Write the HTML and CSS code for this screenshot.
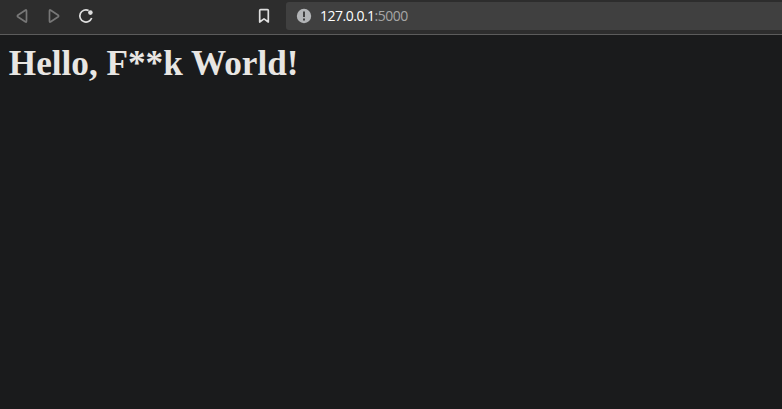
FILE: index.html
```
<!DOCTYPE html>
<html lang="en">
<head>
<meta charset="utf-8">
<title>Hello</title>
<link rel="stylesheet" href="styles.css">
</head>
<body>
<header class="toolbar">
  <nav class="nav">
    <svg class="icon dim" viewBox="0 0 20 20"><path d="M14.5 4.9v10.2q0 1.5-1.2.7L6.1 11q-1.4-1 0-2l7.2-4.8q1.2-.8 1.2.7z"/></svg>
    <svg class="icon dim" viewBox="0 0 20 20"><path d="M5.5 4.9v10.2q0 1.5 1.2.7l7.2-4.8q1.4-1 0-2L6.7 4.2q-1.2-.8-1.2.7z"/></svg>
    <svg class="icon" viewBox="0 0 20 20"><path d="M12.6 4.4A6.1 6.1 0 1 0 15.7 12"/><circle class="solid" cx="14.4" cy="6.6" r="2.3"/></svg>
  </nav>
  <svg class="icon bookmark" viewBox="0 0 20 20"><path d="M5.7 16V4.5q0-.9.9-.9h6.8q.9 0 .9.9V16L10 12.9z"/></svg>
  <div class="address">
    <svg class="info" viewBox="0 0 16 16"><circle class="disc" cx="8" cy="8" r="7.2"/><path class="mark" d="M7 3.6h2v5.3H7zM7 10.4h2v2H7z"/></svg>
    <span class="url"><span class="host">127.0.0.1</span>:5000</span>
  </div>
</header>
<main class="page">
  <h1>Hello, F**k World!</h1>
</main>
</body>
</html>
```
FILE: styles.css
```
body {
  margin: 0;
  height: 100vh;
  overflow: hidden;
  background: #1a1b1c;
}

.toolbar {
  box-sizing: border-box;
  display: flex;
  align-items: center;
  height: 35px;
  padding: 0 0 3px 12px;
  background: #2d2d2d;
  border-bottom: 1px solid #5c5c5c;
}

.nav {
  display: flex;
  gap: 12px;
}

.icon {
  display: block;
  width: 20px;
  height: 20px;
  fill: none;
  stroke: #dedede;
  stroke-width: 1.7;
  stroke-linejoin: round;
}

.dim {
  stroke: #777;
}

.solid {
  fill: #dedede;
  stroke: none;
}

.bookmark {
  margin-left: 158px;
}

.address {
  display: flex;
  flex: 1;
  align-items: center;
  box-sizing: border-box;
  height: 28px;
  margin: 1px 0 0 12px;
  padding-left: 10px;
  background: #404040;
  border-radius: 3px 0 0 3px;
}

.info {
  width: 16px;
  height: 16px;
}

.disc {
  fill: #b2b4b6;
}

.mark {
  fill: #404040;
}

.url {
  margin-left: 8px;
  font: 14px/18px "Open Sans", "Noto Sans", sans-serif;
  letter-spacing: -0.5px;
  color: #a6a6a6;
}

.host {
  color: #fff;
}

.page {
  padding: 8px 8.8px;
}

h1 {
  margin: 0;
  font: bold 35.2px/41px "Liberation Serif", "Times New Roman", serif;
  color: #e8e6e3;
}
```
